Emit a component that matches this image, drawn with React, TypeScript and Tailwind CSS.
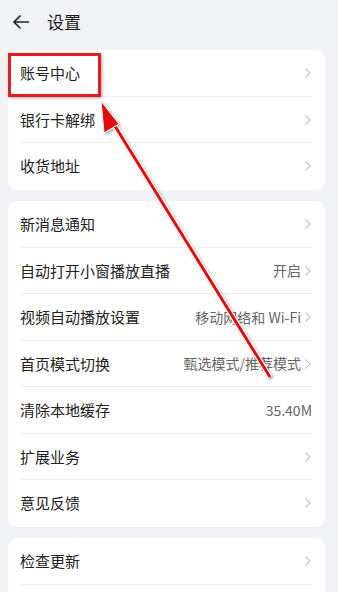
import React from 'react';

type Row = { label: string; value?: string; arrow?: boolean };

const groups: Row[][] = [
  [
    { label: '账号中心', arrow: true },
    { label: '银行卡解绑', arrow: true },
    { label: '收货地址', arrow: true },
  ],
  [
    { label: '新消息通知', arrow: true },
    { label: '自动打开小窗播放直播', value: '开启', arrow: true },
    { label: '视频自动播放设置', value: '移动网络和 Wi-Fi', arrow: true },
    { label: '首页模式切换', value: '甄选模式/推荐模式', arrow: true },
    { label: '清除本地缓存', value: '35.40M' },
    { label: '扩展业务', arrow: true },
    { label: '意见反馈', arrow: true },
  ],
];

const Chevron = () => (
  <svg width="8" height="12" viewBox="0 0 8 12" className="ml-[3px] shrink-0">
    <path d="M1.5 1.5 L6.2 6 L1.5 10.5" fill="none" stroke="#c4c4c4" strokeWidth="1.1" />
  </svg>
);

const SettingRow = ({ row, last }: { row: Row; last: boolean }) => (
  <div className="relative flex h-[46.5px] items-center pl-3 pr-[13px]">
    <span className="text-[15px] text-[#222]">{row.label}</span>
    <div className="ml-auto flex items-center">
      {row.value && <span className="text-[14px] text-[#666]">{row.value}</span>}
      {row.arrow && <Chevron />}
    </div>
    {!last && <div className="absolute bottom-0 left-3 right-[13px] h-px bg-[#efefef]" />}
  </div>
);

export default function App() {
  return (
    <div
      className="relative h-[592px] w-[338px] overflow-hidden bg-[#f1f2f6]"
      style={{ fontFamily: '"Noto Sans CJK SC", "Noto Sans", sans-serif' }}
    >
      <div className="flex h-[44px] items-center pl-3">
        <svg width="18" height="16" viewBox="0 0 18 16">
          <path d="M17 8 H2 M8.5 1.5 L2 8 L8.5 14.5" fill="none" stroke="#222" strokeWidth="1.6" />
        </svg>
        <span className="ml-[17px] text-[17px] text-[#1a1a1a]">设置</span>
      </div>

      <div className="ml-2 mr-[13px] mt-[6px] flex flex-col gap-[11.5px]">
        {groups.map((g, gi) => (
          <div key={gi} className="rounded-[9px] bg-white">
            {g.map((row, ri) => (
              <SettingRow key={row.label} row={row} last={ri === g.length - 1} />
            ))}
          </div>
        ))}
        <div className="rounded-[9px] bg-white">
          <SettingRow row={{ label: '检查更新', arrow: true }} last={false} />
          <div className="h-[20px]" />
        </div>
      </div>

      {/* annotation overlay */}
      <div className="absolute left-[8px] top-[53px] h-[44px] w-[93px] border-[3px] border-[#e02020] shadow-[1px_1px_3px_rgba(0,0,0,0.35)]" />
      <svg className="pointer-events-none absolute left-0 top-0" width="338" height="592" viewBox="0 0 338 592">
        <defs>
          <filter id="sh" x="-20%" y="-20%" width="140%" height="140%">
            <feDropShadow dx="1.5" dy="1.5" stdDeviation="1.2" floodColor="#000" floodOpacity="0.35" />
          </filter>
        </defs>
        <g filter="url(#sh)">
          <line x1="110" y1="118" x2="270" y2="377" stroke="#fff" strokeWidth="5" />
          <line x1="110" y1="118" x2="270" y2="377" stroke="#e01010" strokeWidth="3" />
          <polygon points="101,101 119,124 104,133" fill="#e01010" stroke="#fff" strokeWidth="1" />
        </g>
      </svg>
    </div>
  );
}
